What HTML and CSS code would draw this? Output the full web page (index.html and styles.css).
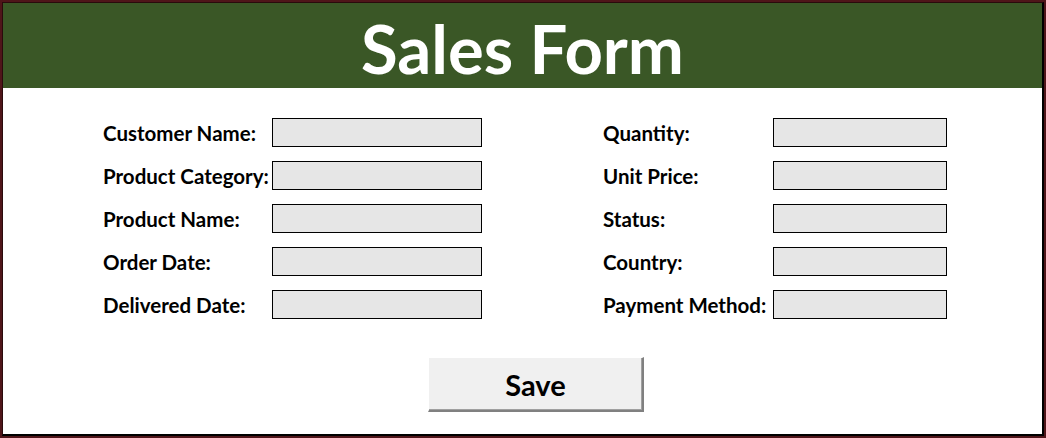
FILE: index.html
```html
<!DOCTYPE html>
<html>
<head>
<meta charset="utf-8">
<link rel="stylesheet" href="styles.css">
</head>
<body>
<div class="frame">
  <div class="inner">
    <header class="header"><h1 class="title">Sales Form</h1></header>
    <main class="content">
      <div class="columns">
        <div class="col col-left">
          <div class="row"><span class="label">Customer Name:</span><span class="field"></span></div>
          <div class="row"><span class="label">Product Category:</span><span class="field"></span></div>
          <div class="row"><span class="label">Product Name:</span><span class="field"></span></div>
          <div class="row"><span class="label">Order Date:</span><span class="field"></span></div>
          <div class="row"><span class="label">Delivered Date:</span><span class="field"></span></div>
        </div>
        <div class="col col-right">
          <div class="row"><span class="label">Quantity:</span><span class="field"></span></div>
          <div class="row"><span class="label">Unit Price:</span><span class="field"></span></div>
          <div class="row"><span class="label">Status:</span><span class="field"></span></div>
          <div class="row"><span class="label">Country:</span><span class="field"></span></div>
          <div class="row"><span class="label">Payment Method:</span><span class="field"></span></div>
        </div>
      </div>
      <div class="actions"><button class="save">Save</button></div>
    </main>
  </div>
</div>
</body>
</html>
```
FILE: styles.css
```css
html, body { margin: 0; padding: 0; background: #ffffff; }
.frame {
  width: 1046px; height: 438px; box-sizing: border-box;
  border: 2px solid #4f1519;
  font-family: Lato, "Liberation Sans", sans-serif;
}
.inner {
  height: 100%; box-sizing: border-box;
  border-top: 1px solid #2a0a0c; border-left: 1px solid #2a0a0c;
  border-right: 2px solid #000; border-bottom: 2px solid #000;
  display: flex; flex-direction: column;
}
.header {
  height: 85px; background: #3a5726;
  display: flex; align-items: center; justify-content: center;
}
.title {
  margin: 0; color: #fff; font-weight: 700; font-size: 67px;
  line-height: 1; letter-spacing: 0px;
  transform: translate(0px, 3px);
}
.content { flex: 1; padding-top: 30px; }
.columns { display: flex; padding-left: 100px; gap: 121px; }
.col { display: flex; flex-direction: column; gap: 14px; }
.row { display: flex; align-items: center; height: 29px; }
.label { font-weight: 700; font-size: 20.5px; color: #000; white-space: nowrap; }
.col-left .label { width: 169px; }
.col-right .label { width: 170px; }
.field {
  box-sizing: border-box; height: 29px; background: #e6e6e6;
  border: 1px solid #000;
}
.col-left .field { width: 210px; }
.col-right .field { width: 174px; }
.actions { padding-left: 425px; padding-top: 38px; }
.save {
  width: 216px; height: 55px; box-sizing: border-box;
  background: #f0f0f0; font-family: inherit; font-weight: 700; font-size: 29px;
  color: #000;
  border-top: 1px solid #ffffff; border-left: 1px solid #ffffff;
  border-right: 2px solid #808080; border-bottom: 2px solid #808080;
  box-shadow: inset -1px -1px 0 #a0a0a0;
  padding: 0;
}
```
